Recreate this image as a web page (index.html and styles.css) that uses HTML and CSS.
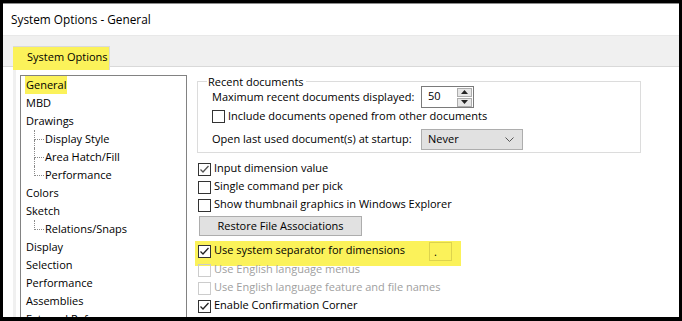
FILE: index.html
```html
<!DOCTYPE html>
<html>
<head>
<meta charset="utf-8">
<link rel="stylesheet" href="styles.css">
</head>
<body>
<div class="window">
  <div class="titlebar">System Options - General</div>
  <div class="tabband"><div class="tab">System Options</div></div>
  <div class="page">
    <div class="tree">
      <div class="item"><span class="hl">General</span></div>
      <div class="item">MBD</div>
      <div class="item">Drawings</div>
      <div class="sub">
        <div class="item child"><span class="conn"></span>Display Style</div>
        <div class="item child"><span class="conn"></span>Area Hatch/Fill</div>
        <div class="item child last"><span class="conn"></span>Performance</div>
      </div>
      <div class="item">Colors</div>
      <div class="item">Sketch</div>
      <div class="sub">
        <div class="item child last"><span class="conn"></span>Relations/Snaps</div>
      </div>
      <div class="item">Display</div>
      <div class="item">Selection</div>
      <div class="item">Performance</div>
      <div class="item">Assemblies</div>
      <div class="item">External References</div>
    </div>
    <div class="options">
      <fieldset class="group">
        <legend>Recent documents</legend>
        <div class="grow first">
          <span class="glabel">Maximum recent documents displayed:</span>
          <div class="spin">
            <span class="spinval">50</span>
            <div class="spinbtns">
              <div class="sbtn"><svg width="7" height="4" viewBox="0 0 7 4"><path d="M0 4 L3.5 0 L7 4Z" fill="#222"/></svg></div>
              <div class="sbtn"><svg width="7" height="4" viewBox="0 0 7 4"><path d="M0 0 L3.5 4 L7 0Z" fill="#222"/></svg></div>
            </div>
          </div>
        </div>
        <div class="grow cbrow2">
          <span class="cb"></span><span class="cbtext">Include documents opened from other documents</span>
        </div>
        <div class="grow third">
          <span class="glabel">Open last used document(s) at startup:</span>
          <div class="combo"><span class="ctext">Never</span><svg width="9" height="5" viewBox="0 0 9 5"><path d="M0.5 0.5 L4.5 4.5 L8.5 0.5" fill="none" stroke="#555" stroke-width="1"/></svg></div>
        </div>
      </fieldset>
      <div class="checks">
        <div class="row"><span class="cb on"><svg width="11" height="11" viewBox="0 0 11 11"><path d="M1.5 5.5 L4 8 L9.5 2" fill="none" stroke="#555" stroke-width="1.3"/></svg></span><span class="cbtext">Input dimension value</span></div>
        <div class="row"><span class="cb"></span><span class="cbtext">Single command per pick</span></div>
        <div class="row"><span class="cb"></span><span class="cbtext">Show thumbnail graphics in Windows Explorer</span></div>
        <div class="btn"><span class="ctext">Restore File Associations</span></div>
        <div class="row yellow"><span class="cb on"><svg width="11" height="11" viewBox="0 0 11 11"><path d="M1.5 5.5 L4 8 L9.5 2" fill="none" stroke="#222" stroke-width="1.3"/></svg></span><span class="cbtext">Use system separator for dimensions</span><span class="sep">.</span></div>
        <div class="row disabled after-yellow"><span class="cb"></span><span class="cbtext">Use English language menus</span></div>
        <div class="row disabled"><span class="cb"></span><span class="cbtext">Use English language feature and file names</span></div>
        <div class="row"><span class="cb on"><svg width="11" height="11" viewBox="0 0 11 11"><path d="M1.5 5.5 L4 8 L9.5 2" fill="none" stroke="#222" stroke-width="1.3"/></svg></span><span class="cbtext">Enable Confirmation Corner</span></div>
      </div>
    </div>
  </div>
</div>
</body>
</html>
```
FILE: styles.css
```css
* { box-sizing: border-box; }
html, body { margin: 0; padding: 0; }
body {
  background: #000;
  width: 682px;
  height: 321px;
  overflow: hidden;
  font-family: "Open Sans", "Noto Sans", sans-serif;
  font-size: 11px;
  color: #000;
}
.window {
  margin: 3px 0 0 3px;
  width: 676px;
  height: 314px;
  background: #fff;
  border-top: 1px solid #8c8c8c;
  overflow: hidden;
  display: flex;
  flex-direction: column;
}
.titlebar {
  height: 31px;
  flex: none;
  display: flex;
  align-items: center;
  padding-left: 8px;
  padding-bottom: 2px;
  font-size: 11.8px;
  color: #000;
}
.tabband {
  height: 32px;
  flex: none;
  background: #f0f0f0;
  border-top: 1px solid #e8e8e8;
  border-bottom: 1px solid #d9d9d9;
  padding: 10px 0 0 10px;
  display: flex;
  align-items: flex-start;
}
.tab {
  width: 97px;
  height: 24px;
  background: #fbf25a;
  border-top: 1px solid #dadada;
  border-right: 1px solid #dadada;
  padding-left: 14px;
  display: flex;
  align-items: center;
  padding-bottom: 5px;
  position: relative;
  z-index: 1;
}
.page {
  flex: 1;
  display: flex;
  align-items: flex-start;
  margin-left: 10px;
  border-left: 3px solid #f0f0f0;
  padding-top: 8px;
  min-height: 0;
}
.tree {
  width: 167px;
  margin-left: 4px;
  border: 1px solid #828282;
  border-bottom: none;
  height: 260px;
  overflow: hidden;
  padding-left: 5px;
  flex: none;
}
.item {
  height: 18px;
  line-height: 17px;
  white-space: nowrap;
}
.hl {
  background: #fbf25a;
  padding: 2px 1px 2px 1px;
  margin-left: -1px;
}
.sub {
  margin-left: 8px;
}
.child {
  display: flex;
  align-items: stretch;
}
.conn {
  width: 10px;
  margin-right: 1px;
  display: flex;
  flex-direction: column;
  flex: none;
}
.conn::before {
  content: "";
  height: 9px;
  border-left: 1px dotted #8a8a8a;
  border-bottom: 1px dotted #8a8a8a;
}
.conn::after {
  content: "";
  flex: 1;
  border-left: 1px dotted #8a8a8a;
}
.last .conn::after { border-left: none; }

.options {
  flex: none;
  width: 480px;
  padding-left: 10px;
}
.group {
  margin: 0;
  width: 444px;
  border: 1px solid #dcdcdc;
  padding: 0 10px 2px 14px;
}
.group legend {
  padding: 0 2px 0 1px;
  margin-left: -5px;
  line-height: 13px;
}
.grow {
  display: flex;
  align-items: center;
}
.grow.first { height: 24px; margin-top: -3px; }
.glabel { width: 209px; flex: none; padding-bottom: 2px; }
.spin {
  width: 53px;
  height: 22px;
  border: 1px solid #7a7a7a;
  display: flex;
  align-items: center;
  justify-content: space-between;
  padding: 0 1px 0 6px;
  background: #fff;
}
.spinval { padding-bottom: 3px; }
.spinbtns {
  display: flex;
  flex-direction: column;
  gap: 1px;
}
.sbtn {
  width: 15px;
  height: 9px;
  background: #e6e6e6;
  border: 1px solid #adadad;
  display: flex;
  align-items: center;
  justify-content: center;
}
.grow.cbrow2 { height: 15px; margin-top: 0; }
.grow.third { height: 21px; margin-top: 5px; }
.combo {
  width: 102px;
  height: 21px;
  background: #e1e1e1;
  border: 1px solid #adadad;
  display: flex;
  align-items: center;
  justify-content: space-between;
  padding: 0 8px 0 6px;
}
.ctext { padding-bottom: 2px; }
.cb {
  width: 13px;
  height: 13px;
  border: 1px solid #333;
  background: #fff;
  flex: none;
  display: flex;
  align-items: center;
  justify-content: center;
}
.cbtext { margin-left: 3px; white-space: nowrap; padding-bottom: 3px; }
.checks {
  margin-top: 7px;
  padding-left: 1px;
}
.row {
  height: 18px;
  display: flex;
  align-items: center;
}
.btn {
  margin-top: 2px;
  margin-left: 1px;
  width: 163px;
  height: 20px;
  background: #e1e1e1;
  border: 1px solid #adadad;
  display: flex;
  align-items: center;
  justify-content: center;
}
.row.yellow {
  margin-top: 5px;
  margin-left: -3px;
  width: 266px;
  height: 25px;
  padding: 0 9px 5px 3px;
  background: #fbf25a;
  align-items: center;
}
.sep {
  margin-left: auto;
  width: 23px;
  height: 19px;
  border: 1px solid #ddd34d;
  padding-left: 4px;
  line-height: 17px;
}
.row.after-yellow { margin-top: -5px; }
.disabled .cb { border-color: #cccccc; background: transparent; }
.disabled .cbtext { color: #a0a0a0; }
```
